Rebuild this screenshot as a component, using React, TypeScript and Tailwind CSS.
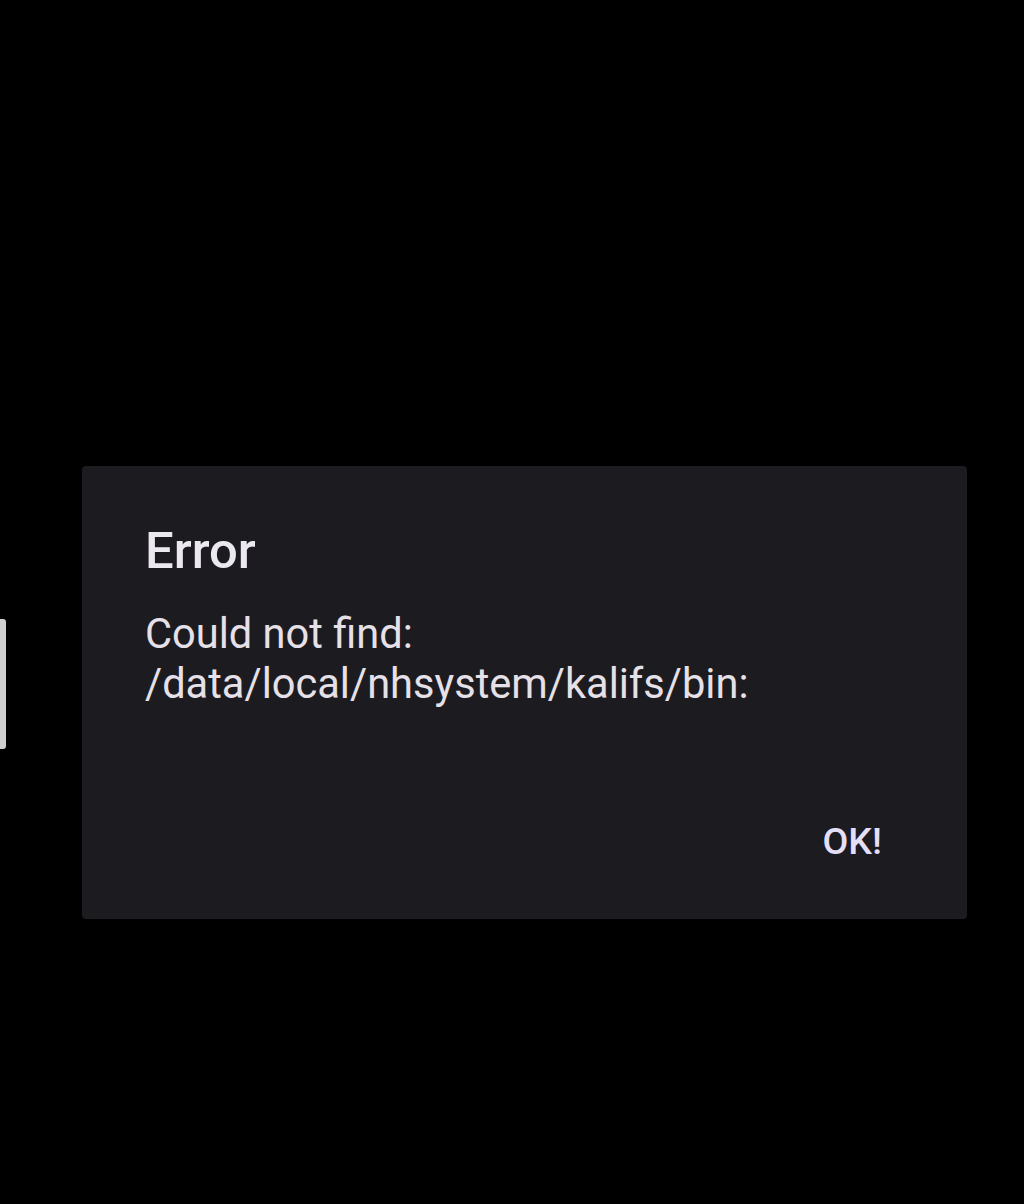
export default function App() {
  return (
    <div className="relative w-[1024px] h-[1204px] bg-black overflow-hidden" style={{ fontFamily: "Roboto, 'Noto Sans', sans-serif" }}>
      <div className="absolute left-0 top-[619px] w-[6px] h-[130px] bg-[#cfcfcf] rounded-r-[3px]" />
      <div className="pt-[466px] pl-[82px]">
        <div className="w-[885px] h-[453px] bg-[#1c1b20] rounded-[4px] flex flex-col pl-[63px] pr-[85px]">
          <div className="mt-[55px] text-[50.8px] leading-[60px] font-medium text-[#ece8f0]">Error</div>
          <div className="mt-[28px] text-[41.6px] leading-[50px] text-[#e6e1e8]">
            <div>Could not find:</div>
            <div>/data/local/nhsystem/kalifs/bin:</div>
          </div>
          <div className="mt-auto mb-[58px] flex justify-end">
            <span className="text-[37.5px] leading-[40px] font-medium text-[#e4def6]">OK!</span>
          </div>
        </div>
      </div>
    </div>
  );
}
